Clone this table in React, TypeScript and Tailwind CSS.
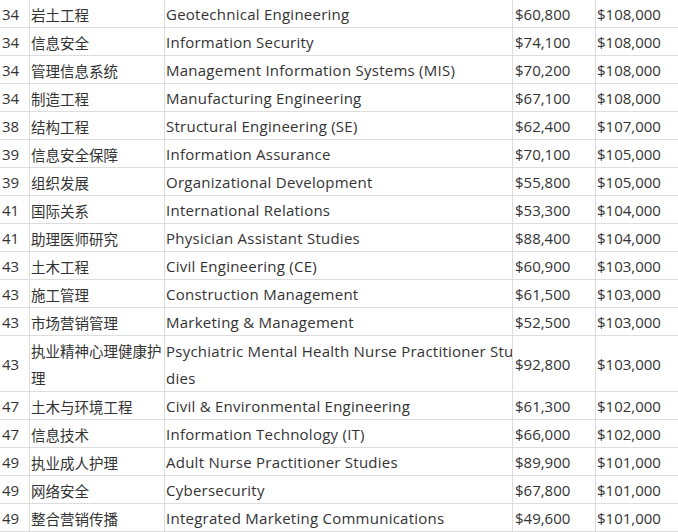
import React from 'react';

interface Row {
  rank: string;
  cn: string[];
  en: string[];
  start: string;
  mid: string;
}

// two-line cells are split by hand so the wrap lands where it does in the source page
const rows: Row[] = [
  { rank: '34', cn: ['岩土工程'], en: ['Geotechnical Engineering'], start: '$60,800', mid: '$108,000' },
  { rank: '34', cn: ['信息安全'], en: ['Information Security'], start: '$74,100', mid: '$108,000' },
  { rank: '34', cn: ['管理信息系统'], en: ['Management Information Systems (MIS)'], start: '$70,200', mid: '$108,000' },
  { rank: '34', cn: ['制造工程'], en: ['Manufacturing Engineering'], start: '$67,100', mid: '$108,000' },
  { rank: '38', cn: ['结构工程'], en: ['Structural Engineering (SE)'], start: '$62,400', mid: '$107,000' },
  { rank: '39', cn: ['信息安全保障'], en: ['Information Assurance'], start: '$70,100', mid: '$105,000' },
  { rank: '39', cn: ['组织发展'], en: ['Organizational Development'], start: '$55,800', mid: '$105,000' },
  { rank: '41', cn: ['国际关系'], en: ['International Relations'], start: '$53,300', mid: '$104,000' },
  { rank: '41', cn: ['助理医师研究'], en: ['Physician Assistant Studies'], start: '$88,400', mid: '$104,000' },
  { rank: '43', cn: ['土木工程'], en: ['Civil Engineering (CE)'], start: '$60,900', mid: '$103,000' },
  { rank: '43', cn: ['施工管理'], en: ['Construction Management'], start: '$61,500', mid: '$103,000' },
  { rank: '43', cn: ['市场营销管理'], en: ['Marketing & Management'], start: '$52,500', mid: '$103,000' },
  {
    rank: '43',
    cn: ['执业精神心理健康护', '理'],
    en: ['Psychiatric Mental Health Nurse Practitioner Stu', 'dies'],
    start: '$92,800',
    mid: '$103,000',
  },
  { rank: '47', cn: ['土木与环境工程'], en: ['Civil & Environmental Engineering'], start: '$61,300', mid: '$102,000' },
  { rank: '47', cn: ['信息技术'], en: ['Information Technology (IT)'], start: '$66,000', mid: '$102,000' },
  { rank: '49', cn: ['执业成人护理'], en: ['Adult Nurse Practitioner Studies'], start: '$89,900', mid: '$101,000' },
  { rank: '49', cn: ['网络安全'], en: ['Cybersecurity'], start: '$67,800', mid: '$101,000' },
  { rank: '49', cn: ['整合营销传播'], en: ['Integrated Marketing Communications'], start: '$49,600', mid: '$101,000' },
];

const cell =
  'flex flex-col justify-center pt-[2px] border-r border-b border-[#dddddd] overflow-hidden whitespace-nowrap';

function Lines({ lines }: { lines: string[] }) {
  const tall = lines.length > 1;
  return (
    <>
      {lines.map((l, i) => (
        <span key={i} className={tall ? 'block leading-[26.5px]' : 'block leading-[25px]'}>
          {l}
        </span>
      ))}
    </>
  );
}

export default function App() {
  return (
    <div
      className="w-[678px] h-[532px] overflow-hidden bg-white text-[15px] text-[#333333]"
      style={{ fontFamily: '"Open Sans", "Noto Sans CJK SC", sans-serif' }}
    >
      <div className="grid grid-cols-[30px_135px_348px_83px_90px]">
        {rows.map((r, i) => (
          <React.Fragment key={i}>
            <div className={`${cell} pl-[2px]`}>
              <span className="block leading-[25px]">{r.rank}</span>
            </div>
            <div className={`${cell} pl-[1px] text-[14.5px]`} style={{ fontFamily: '"Noto Sans CJK SC", sans-serif' }}>
              <Lines lines={r.cn} />
            </div>
            <div className={`${cell} pl-[1px] tracking-[0.25px]`}>
              <Lines lines={r.en} />
            </div>
            <div className={`${cell} pl-[2px]`}>
              <span className="block leading-[25px]">{r.start}</span>
            </div>
            <div className={`${cell} pl-[1px]`}>
              <span className="block leading-[25px]">{r.mid}</span>
            </div>
          </React.Fragment>
        ))}
      </div>
    </div>
  );
}
